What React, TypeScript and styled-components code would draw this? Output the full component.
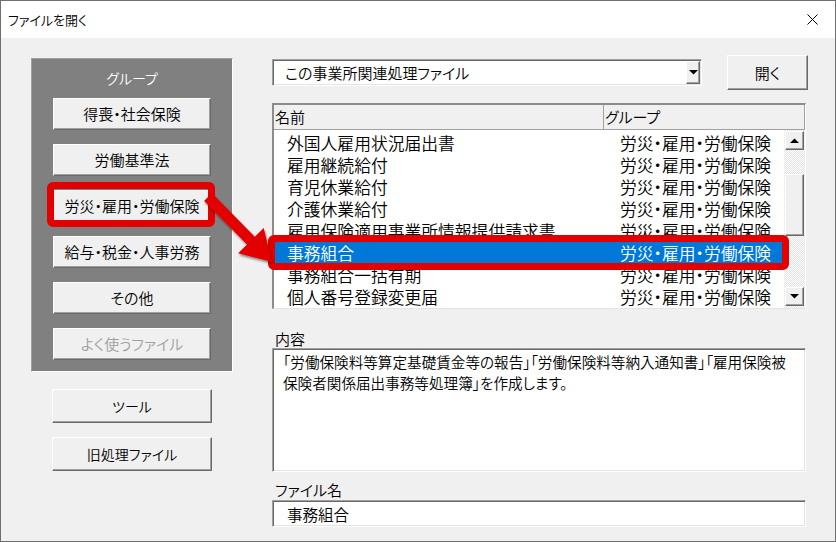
import React from "react";
import styled, { createGlobalStyle, css } from "styled-components";

const GlobalStyle = createGlobalStyle`
  html, body { margin: 0; padding: 0; background: #ffffff; }
  body {
    font-family: "Noto Sans CJK JP", "Noto Sans", sans-serif;
    font-feature-settings: "palt";
    font-weight: 350;
    color: #000;
  }
  * { box-sizing: border-box; }
`;

const raised = css`
  background: #f0f0f0;
  border-style: solid;
  border-width: 1px;
  border-color: #ffffff #696969 #696969 #ffffff;
  box-shadow: inset -1px -1px 0 #a0a0a0;
`;

const sunken = css`
  background: #ffffff;
  border-style: solid;
  border-width: 1px;
  border-color: #a0a0a0 #ffffff #ffffff #a0a0a0;
  box-shadow: inset 1px 1px 0 #696969, inset -1px -1px 0 #e3e3e3;
`;

const Window = styled.div`
  position: relative;
  width: 836px;
  height: 542px;
  border: 1px solid #6f6f6f;
  background: #f0f0f0;
  display: flex;
  flex-direction: column;
  overflow: hidden;
`;

const TitleBar = styled.div`
  height: 37px;
  flex: none;
  background: #ffffff;
  display: flex;
  align-items: center;
  justify-content: space-between;
  padding: 0 17px 0 7px;
`;

const TitleText = styled.span`
  font-size: 13px;
  line-height: 16px;
`;

const Body = styled.div`
  flex: 1;
  display: flex;
  align-items: flex-start;
  padding: 17px 0 0 30px;
`;

const LeftCol = styled.div`
  width: 202px;
  flex: none;
  padding-top: 3px;
  display: flex;
  flex-direction: column;
  align-items: center;
`;

const GroupPanel = styled.div`
  width: 202px;
  height: 314px;
  background: #808080;
  border-style: solid;
  border-width: 1px;
  border-color: #a0a0a0 #ffffff #ffffff #a0a0a0;
  display: flex;
  flex-direction: column;
  align-items: center;
  padding-top: 9px;
  gap: 14px;
`;

const PanelTitle = styled.div`
  color: #ffffff;
  font-size: 14px;
  line-height: 18px;
  height: 18px;
  margin-bottom: -3px;
  margin-top: 1px;
`;

const GroupButton = styled.div<{ $disabled?: boolean }>`
  ${raised};
  width: 158px;
  height: 32px;
  flex: none;
  display: flex;
  align-items: center;
  justify-content: center;
  font-size: 15px;
  line-height: 18px;
  color: ${(p) => (p.$disabled ? "#a0a0a0" : "#000")};
`;

const SideButton = styled.div<{ $first?: boolean }>`
  ${raised};
  width: 160px;
  height: 34px;
  margin-top: ${(p) => (p.$first ? "17px" : "14px")};
  display: flex;
  align-items: center;
  justify-content: center;
  font-size: 14px;
  line-height: 18px;
`;

const RightCol = styled.div`
  width: 536px;
  margin-left: 39px;
  display: flex;
  flex-direction: column;
`;

const TopRow = styled.div`
  height: 35px;
  display: flex;
  align-items: center;
  gap: 25px;
`;

const Combo = styled.div`
  ${sunken};
  width: 430px;
  height: 27px;
  display: flex;
  align-items: center;
  padding: 0 1px 0 12px;
`;

const ComboText = styled.span`
  flex: 1;
  font-size: 15px;
  line-height: 18px;
`;

const ComboArrow = styled.div`
  ${raised};
  width: 14px;
  height: 23px;
  display: flex;
  align-items: center;
  justify-content: center;
`;

const PushButton = styled.div`
  ${raised};
  width: 81px;
  height: 35px;
  display: flex;
  align-items: center;
  justify-content: center;
  font-size: 15px;
  line-height: 18px;
`;

const ListBox = styled.div`
  ${sunken};
  border-width: 2px 1px 1px 2px;
  border-color: #8c8c8c #ffffff #e3e3e3 #8c8c8c;
  box-shadow: none;
  margin-top: 13px;
  width: 534px;
  height: 206px;
  display: flex;
  flex-direction: column;
  overflow: hidden;
`;

const ListHeader = styled.div`
  height: 25px;
  flex: none;
  display: flex;
  background: #f0f0f0;
  border-bottom: 1px solid #a0a0a0;
`;

const HeaderCell = styled.div<{ $w?: number }>`
  width: ${(p) => (p.$w ? `${p.$w}px` : "auto")};
  flex: ${(p) => (p.$w ? "none" : "1")};
  border-right: 1px solid #a0a0a0;
  padding-left: 1px;
  font-size: 15px;
  line-height: 24px;
`;

const ListBody = styled.div`
  flex: 1;
  display: flex;
  min-height: 0;
`;

const Rows = styled.div`
  flex: 1;
  padding-top: 2px;
  overflow: hidden;
`;

const Row = styled.div<{ $selected?: boolean }>`
  height: 22px;
  display: grid;
  grid-template-columns: 330px 1fr;
  align-items: center;
  font-size: 16.8px;
  line-height: 22px;
  white-space: nowrap;
  background: ${(p) => (p.$selected ? "#0078d7" : "transparent")};
  color: ${(p) => (p.$selected ? "#ffffff" : "#000")};
  border-bottom: 1px dotted ${(p) => (p.$selected ? "#1a1a1a" : "transparent")};
`;

const NameCell = styled.span`
  padding-left: 13px;
  overflow: hidden;
`;

const GroupCell = styled.span`
  padding-left: 16px;
`;

const ScrollBar = styled.div`
  width: 21px;
  flex: none;
  display: flex;
  flex-direction: column;
  padding: 1px 1px 2px 1px;
  background-color: #ffffff;
  background-image: repeating-conic-gradient(#e2e2e2 0 25%, #ffffff 0 50%);
  background-size: 2px 2px;
`;

const ScrollBtn = styled.div`
  ${raised};
  height: 19px;
  flex: none;
  display: flex;
  align-items: center;
  justify-content: center;
`;

const Thumb = styled.div`
  ${raised};
  height: 62px;
  margin-top: 24px;
  flex: none;
`;

const Spacer = styled.div`
  flex: 1;
`;

const FieldLabel = styled.div<{ $gap: number }>`
  margin-top: ${(p) => p.$gap}px;
  height: 18px;
  font-size: 15px;
  line-height: 18px;
  padding-left: 3px;
`;

const DescBox = styled.div`
  ${sunken};
  width: 534px;
  height: 124px;
  padding: 2px 8px 0 10px;
  font-size: 14.6px;
  line-height: 21px;
  white-space: nowrap;
`;

const FileBox = styled.div`
  ${sunken};
  width: 534px;
  height: 27px;
  margin-top: 1px;
  padding-left: 14px;
  display: flex;
  align-items: center;
  font-size: 15.5px;
  line-height: 18px;
`;

const Highlight = styled.div<{ $x: number; $y: number; $w: number; $h: number }>`
  position: absolute;
  left: ${(p) => p.$x - 1}px;
  top: ${(p) => p.$y - 1}px;
  width: ${(p) => p.$w}px;
  height: ${(p) => p.$h}px;
  border: 7px solid #e20000;
  border-radius: 6px;
  pointer-events: none;
`;

const ArrowLayer = styled.svg`
  position: absolute;
  left: -1px;
  top: -1px;
  width: 836px;
  height: 542px;
  pointer-events: none;
`;

const Tri = ({ up }: { up?: boolean }) => (
  <svg width="9" height="5" viewBox="0 0 9 5">
    <polygon points={up ? "0,5 9,5 4.5,0.5" : "0,0 9,0 4.5,4.5"} fill="#000" />
  </svg>
);

const rows = [
  { name: "外国人雇用状況届出書" },
  { name: "雇用継続給付" },
  { name: "育児休業給付" },
  { name: "介護休業給付" },
  { name: "雇用保険適用事業所情報提供請求書" },
  { name: "事務組合", selected: true },
  { name: "事務組合一括有期" },
  { name: "個人番号登録変更届" },
];

const groups = [
  { label: "得喪・社会保険" },
  { label: "労働基準法" },
  { label: "労災・雇用・労働保険" },
  { label: "給与・税金・人事労務" },
  { label: "その他" },
  { label: "よく使うファイル", disabled: true },
];

export default function App() {
  return (
    <>
      <GlobalStyle />
      <Window>
        <TitleBar>
          <TitleText>ファイルを開く</TitleText>
          <svg width="11" height="11" viewBox="0 0 11 11">
            <path d="M0.5 0.5 L10.5 10.5 M10.5 0.5 L0.5 10.5" stroke="#000" strokeWidth="1" fill="none" />
          </svg>
        </TitleBar>
        <Body>
          <LeftCol>
            <GroupPanel>
              <PanelTitle>グループ</PanelTitle>
              {groups.map((g) => (
                <GroupButton key={g.label} $disabled={g.disabled}>
                  {g.label}
                </GroupButton>
              ))}
            </GroupPanel>
            <SideButton $first>ツール</SideButton>
            <SideButton>旧処理ファイル</SideButton>
          </LeftCol>
          <RightCol>
            <TopRow>
              <Combo>
                <ComboText>この事業所関連処理ファイル</ComboText>
                <ComboArrow>
                  <Tri />
                </ComboArrow>
              </Combo>
              <PushButton>開く</PushButton>
            </TopRow>
            <ListBox>
              <ListHeader>
                <HeaderCell $w={330}>名前</HeaderCell>
                <HeaderCell>グループ</HeaderCell>
              </ListHeader>
              <ListBody>
                <Rows>
                  {rows.map((r) => (
                    <Row key={r.name} $selected={r.selected}>
                      <NameCell>{r.name}</NameCell>
                      <GroupCell>労災・雇用・労働保険</GroupCell>
                    </Row>
                  ))}
                </Rows>
                <ScrollBar>
                  <ScrollBtn>
                    <Tri up />
                  </ScrollBtn>
                  <Thumb />
                  <Spacer />
                  <ScrollBtn>
                    <Tri />
                  </ScrollBtn>
                </ScrollBar>
              </ListBody>
            </ListBox>
            <FieldLabel $gap={21}>内容</FieldLabel>
            <DescBox>
              「労働保険料等算定基礎賃金等の報告」「労働保険料等納入通知書」「雇用保険被
              <br />
              保険者関係届出事務等処理簿」を作成します。
            </DescBox>
            <FieldLabel $gap={9}>ファイル名</FieldLabel>
            <FileBox>事務組合</FileBox>
          </RightCol>
        </Body>
        <Highlight $x={47} $y={182} $w={168} $h={45} />
        <Highlight $x={268} $y={235} $w={521} $h={35} />
        <ArrowLayer viewBox="0 0 836 542">
          <defs>
            <filter id="arrowShadow" x="-20%" y="-20%" width="140%" height="140%">
              <feDropShadow dx="1" dy="2" stdDeviation="1" floodColor="#000" floodOpacity="0.45" />
            </filter>
          </defs>
          <polygon
            points="211.9,193.1 254.8,236.7 263.7,228 272,262 238.1,253.2 247,244.5 204.1,200.9"
            fill="#e20000"
            filter="url(#arrowShadow)"
          />
        </ArrowLayer>
      </Window>
    </>
  );
}
